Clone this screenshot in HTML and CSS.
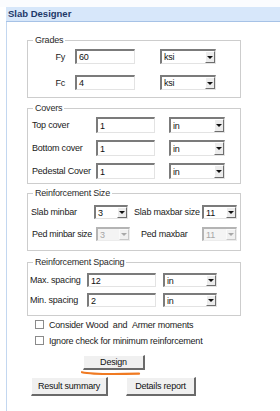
FILE: index.html
```html
<!DOCTYPE html>
<html>
<head>
<meta charset="utf-8">
<link rel="stylesheet" href="styles.css">
</head>
<body>
<div class="topstrip"></div>
<div class="header">Slab Designer</div>
<div class="panel">
  <div class="group grades">
    <div class="legend">Grades</div>
    <div class="row r-fy">
      <span class="lbl lbl-grade">Fy</span>
      <span class="input w60">60</span>
      <span class="sel w56 ml25"><span class="val">ksi</span><span class="btn"></span></span>
    </div>
    <div class="row r-fc">
      <span class="lbl lbl-grade">Fc</span>
      <span class="input w60">4</span>
      <span class="sel w56 ml25"><span class="val">ksi</span><span class="btn"></span></span>
    </div>
  </div>

  <div class="group covers">
    <div class="legend">Covers</div>
    <div class="row r-cov first">
      <span class="lbl lbl-cov">Top cover</span>
      <span class="input w59">1</span>
      <span class="sel w56 ml14"><span class="val">in</span><span class="btn"></span></span>
    </div>
    <div class="row r-cov">
      <span class="lbl lbl-cov">Bottom cover</span>
      <span class="input w59">1</span>
      <span class="sel w56 ml14"><span class="val">in</span><span class="btn"></span></span>
    </div>
    <div class="row r-cov">
      <span class="lbl lbl-cov">Pedestal Cover</span>
      <span class="input w59">1</span>
      <span class="sel w56 ml14"><span class="val">in</span><span class="btn"></span></span>
    </div>
  </div>

  <div class="group rsize">
    <div class="legend">Reinforcement Size</div>
    <div class="row r-size1">
      <span class="lbl lbl-smin">Slab minbar</span>
      <span class="sel w34"><span class="val">3</span><span class="btn"></span></span>
      <span class="lbl lbl-smax">Slab maxbar size</span>
      <span class="sel w35"><span class="val">11</span><span class="btn"></span></span>
    </div>
    <div class="row r-size2">
      <span class="lbl lbl-pmin">Ped minbar size</span>
      <span class="sel w34 disabled"><span class="val">3</span><span class="btn"></span></span>
      <span class="lbl lbl-pmax">Ped maxbar</span>
      <span class="sel w35 disabled"><span class="val">11</span><span class="btn"></span></span>
    </div>
  </div>

  <div class="group rspace">
    <div class="legend">Reinforcement Spacing</div>
    <div class="row r-sp1">
      <span class="lbl lbl-sp">Max. spacing</span>
      <span class="input w69">12</span>
      <span class="sel w54 ml7"><span class="val">in</span><span class="btn"></span></span>
    </div>
    <div class="row r-sp2">
      <span class="lbl lbl-sp">Min. spacing</span>
      <span class="input w69">2</span>
      <span class="sel w54 ml7"><span class="val">in</span><span class="btn"></span></span>
    </div>
  </div>

  <div class="checks">
    <label class="check"><span class="box"></span>Consider Wood &nbsp;and &nbsp;Armer moments</label>
    <label class="check"><span class="box"></span>Ignore check for minimum reinforcement</label>
  </div>

  <div class="design-wrap">
    <button class="button design">Design</button>
    <svg class="mark" width="64" height="6" viewBox="0 0 64 6"><path d="M1 2.2 C 10 4.2, 30 4.4, 58 3.6" stroke="#f07a22" stroke-width="2.2" fill="none" stroke-linecap="round"/></svg>
  </div>

  <div class="bottom-buttons">
    <button class="button result">Result summary</button>
    <button class="button details">Details report</button>
  </div>
</div>
</body>
</html>
```

FILE: styles.css
```css
html, body {
  margin: 0;
  padding: 0;
}
body {
  width: 280px;
  height: 411px;
  overflow: hidden;
  background: #ffffff;
  font-family: "Liberation Sans", Arial, sans-serif;
  font-size: 9px;
  letter-spacing: -0.2px;
  color: #1a1a1a;
}
.topstrip {
  height: 7px;
  background: #fbfcfe;
}
.header {
  margin-left: 6px;
  height: 14px;
  line-height: 14px;
  background: #d7e7fa;
  border-bottom: 1px solid #a6c2e6;
  color: #1d3868;
  font-weight: bold;
  font-size: 9.5px;
  letter-spacing: 0;
  padding-left: 2px;
}
.panel {
  margin-left: 6px;
  border-left: 1px solid #c3d7f0;
  height: 389px;
  padding-left: 20px;
  padding-top: 18px;
  box-sizing: border-box;
}
.group {
  width: 214px;
  box-sizing: border-box;
  border: 1px solid #cdcdcd;
}
.legend {
  margin: -6px 0 0 5px;
  padding: 0 2px;
  background: #fff;
  width: max-content;
  height: 11px;
  line-height: 11px;
  color: #2a2a2a;
}
.row {
  display: flex;
  align-items: center;
}
.lbl {
  white-space: nowrap;
}
/* Grades */
.grades { height: 58px; }
.r-fy { margin-top: 3px; height: 15px; }
.r-fc { margin-top: 11px; height: 15px; }
.lbl-grade { width: 37px; text-align: right; margin-right: 10px; }

/* Covers */
.covers { height: 76px; margin-top: 10px; }
.r-cov { height: 16px; margin-top: 7px; }
.r-cov.first { margin-top: 3px; }
.lbl-cov { width: 68px; padding-left: 4px; box-sizing: border-box; }

/* Reinforcement size */
.rsize { height: 58px; margin-top: 9px; }
.r-size1 { height: 14px; margin-top: 6px; }
.r-size2 { height: 14px; margin-top: 8px; }
.lbl-smin { width: 66px; padding-left: 3px; box-sizing: border-box; }
.lbl-smax { width: 74px; padding-left: 6px; box-sizing: border-box; }
.lbl-pmin { width: 68px; padding-left: 4px; box-sizing: border-box; letter-spacing: -0.3px; }
.lbl-pmax { width: 72px; padding-left: 11px; box-sizing: border-box; }

/* Reinforcement spacing */
.rspace { height: 54px; margin-top: 11px; }
.r-sp1 { height: 14px; margin-top: 5px; }
.r-sp2 { height: 14px; margin-top: 6px; }
.lbl-sp { width: 59px; padding-left: 2px; box-sizing: border-box; }

/* inputs */
.input {
  height: 100%;
  box-sizing: border-box;
  background: #fff;
  border-style: solid;
  border-width: 2px 1px 1px 2px;
  border-color: #7b7b7b #e3e3e3 #e3e3e3 #7b7b7b;
  padding-left: 2px;
  display: flex;
  align-items: center;
  color: #111;
}
.sel {
  height: 100%;
  box-sizing: border-box;
  display: flex;
  border-style: solid;
  border-width: 2px 1px 1px 2px;
  border-color: #7b7b7b #e3e3e3 #e3e3e3 #7b7b7b;
  background: #fff;
}
.sel .val {
  flex: 1;
  padding-left: 2px;
  display: flex;
  align-items: center;
  color: #111;
}
.sel .btn {
  width: 10px;
  box-sizing: border-box;
  background: #ececec;
  border: 1px solid;
  border-color: #ffffff #6e6e6e #6e6e6e #ffffff;
  display: flex;
  align-items: center;
  justify-content: center;
}
.sel .btn::after {
  content: "";
  border-left: 3px solid transparent;
  border-right: 3px solid transparent;
  border-top: 3px solid #111;
}
.sel.disabled {
  border-color: #b4b4b4 #ececec #ececec #b4b4b4;
  background: #f4f4f4;
}
.sel.disabled .val { color: #a6a6a6; }
.sel.disabled .btn { background: #f0f0f0; border-color: #fafafa #c8c8c8 #c8c8c8 #fafafa; }
.sel.disabled .btn::after { border-top-color: #a8a8a8; }

.w60 { width: 60px; }
.w59 { width: 59px; }
.w69 { width: 69px; }
.w56 { width: 56px; }
.w54 { width: 54px; }
.w34 { width: 34px; }
.w35 { width: 35px; }
.ml25 { margin-left: 25px; }
.ml14 { margin-left: 14px; }
.ml7 { margin-left: 7px; }

/* checkboxes */
.checks {
  margin-top: 3px;
  padding-left: 8px;
  display: flex;
  flex-direction: column;
  gap: 5px;
}
.check {
  display: flex;
  align-items: center;
  height: 11px;
  white-space: nowrap;
}
.box {
  width: 9px;
  height: 9px;
  box-sizing: border-box;
  border: 1px solid #8a8a8a;
  background: #fff;
  margin-right: 5px;
}

/* buttons */
.button {
  font-family: "Liberation Sans", Arial, sans-serif;
  font-size: 9px;
  letter-spacing: -0.2px;
  color: #111;
  background: #f0f0f0;
  border-style: solid;
  border-width: 1px 2px 2px 1px;
  border-color: #ffffff #6a6a6a #6a6a6a #ffffff;
  padding: 0;
  margin: 0;
  box-sizing: border-box;
}
.design-wrap {
  position: relative;
  margin-top: 9px;
  margin-left: 56px;
  width: 62px;
  height: 15px;
}
.design {
  width: 62px;
  height: 15px;
}
.mark {
  position: absolute;
  left: -2px;
  top: 15px;
}
.bottom-buttons {
  display: flex;
  margin-top: 7px;
  margin-left: 4px;
  gap: 18px;
}
.result { width: 77px; height: 19px; }
.details { width: 70px; height: 19px; }
```
